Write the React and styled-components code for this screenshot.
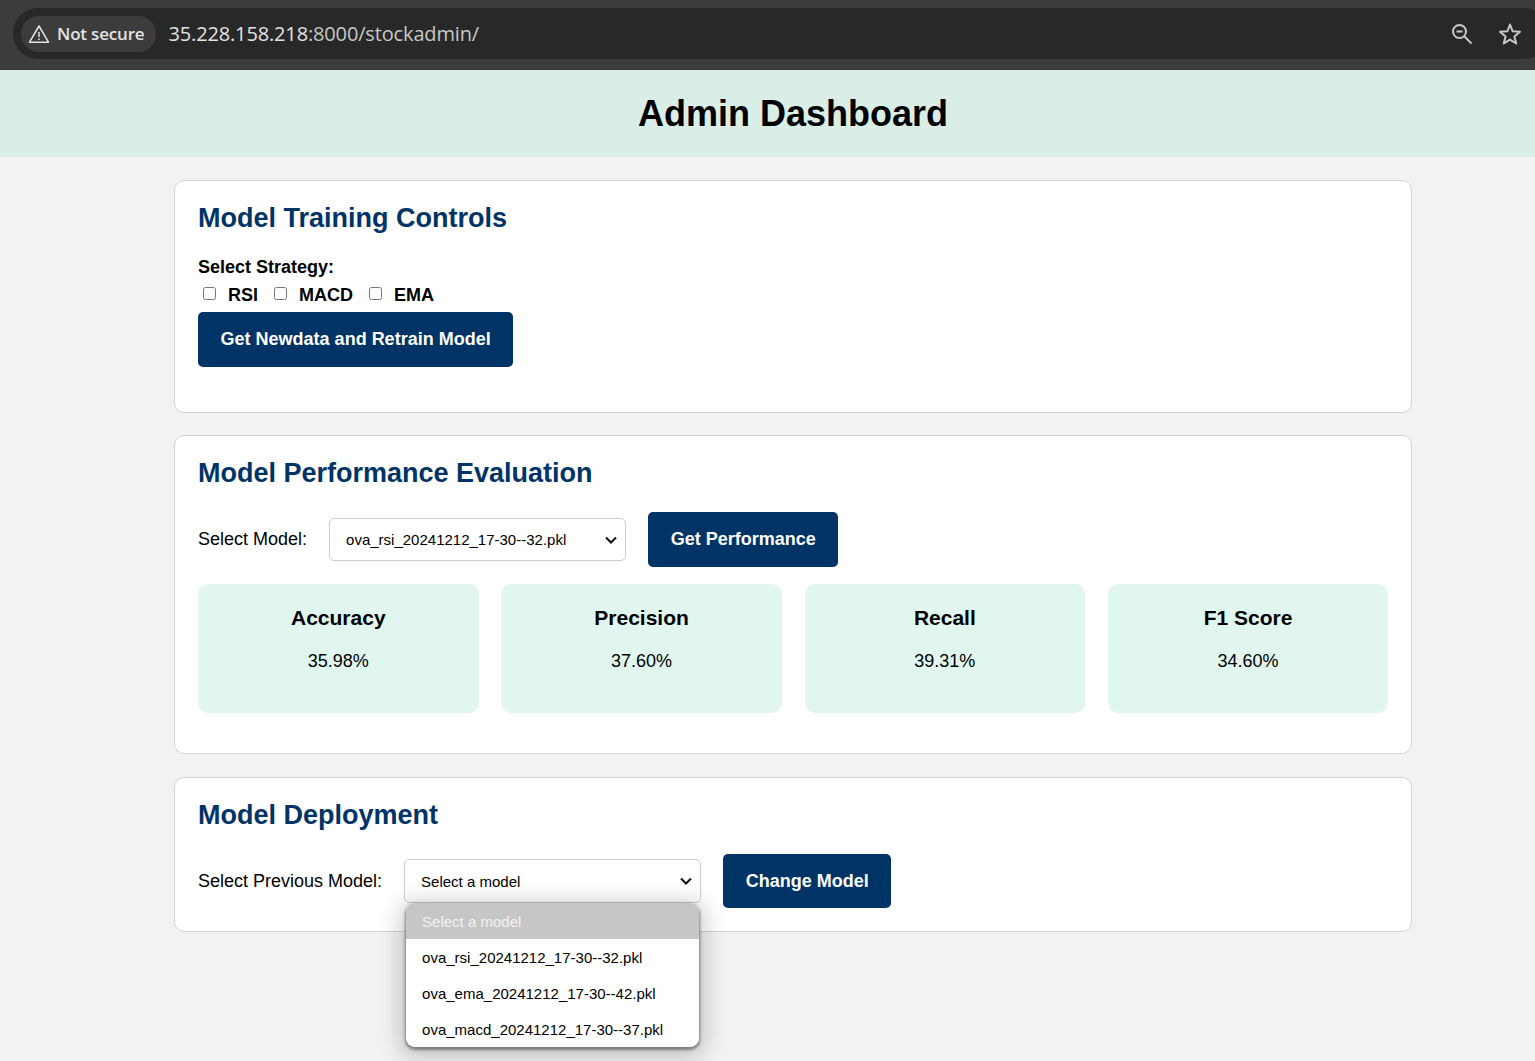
import React from "react";
import styled, { createGlobalStyle } from "styled-components";

const GlobalStyle = createGlobalStyle`
  html, body {
    margin: 0;
    padding: 0;
    height: 100%;
    overflow: hidden;
    background: #f2f2f2;
  }
  body {
    font-family: "Liberation Sans", Arial, sans-serif;
  }
`;

const metrics = [
  { name: "Accuracy", value: "35.98%" },
  { name: "Precision", value: "37.60%" },
  { name: "Recall", value: "39.31%" },
  { name: "F1 Score", value: "34.60%" },
];

const models = [
  "ova_rsi_20241212_17-30--32.pkl",
  "ova_ema_20241212_17-30--42.pkl",
  "ova_macd_20241212_17-30--37.pkl",
];

const Chevron = () => (
  <ChevronIcon width="12" height="8" viewBox="0 0 12 8" fill="none" stroke="#111" strokeWidth="2">
    <path d="M1 1.5 L6 6.5 L11 1.5" />
  </ChevronIcon>
);

const App = () => {
  return (
    <Window>
      <GlobalStyle />
      <BrowserBar>
        <AddressBar>
          <SecurityChip>
            <svg width="22" height="20" viewBox="0 0 22 20" fill="none" stroke="#e3e3e3" strokeWidth="1.5">
              <path d="M11 2 L20.5 18.2 H1.5 Z" strokeLinejoin="round" />
              <path d="M11 8 V13 M11 14.4 V16" />
            </svg>
            <span>Not secure</span>
          </SecurityChip>
          <Url>
            35.228.158.218<UrlDim>:8000/stockadmin/</UrlDim>
          </Url>
          <BarIcons>
            <svg width="24" height="24" viewBox="0 0 24 24" fill="none" stroke="#c7c7c7" strokeWidth="2">
              <circle cx="9.5" cy="9.5" r="6.5" />
              <path d="M14.5 14.5 L21.5 21.5" />
              <path d="M6.5 9.5 H12.5" />
            </svg>
            <svg width="24" height="24" viewBox="0 0 24 24" fill="none" stroke="#c7c7c7" strokeWidth="2">
              <path d="M12 2.5 L14.7 9.3 L22 9.8 L16.4 14.4 L18.2 21.5 L12 17.6 L5.8 21.5 L7.6 14.4 L2 9.8 L9.3 9.3 Z" strokeLinejoin="round" />
            </svg>
          </BarIcons>
        </AddressBar>
      </BrowserBar>

      <Page>
        <Header>
          <h1>Admin Dashboard</h1>
        </Header>

        <Main>
          <Card>
            <CardTitle>Model Training Controls</CardTitle>
            <StrategyLabel>Select Strategy:</StrategyLabel>
            <CheckRow>
              <CheckItem>
                <input type="checkbox" />
                RSI
              </CheckItem>
              <CheckItem>
                <input type="checkbox" />
                MACD
              </CheckItem>
              <CheckItem>
                <input type="checkbox" />
                EMA
              </CheckItem>
            </CheckRow>
            <PrimaryButton>Get Newdata and Retrain Model</PrimaryButton>
          </Card>

          <Card $bottom={40}>
            <CardTitle>Model Performance Evaluation</CardTitle>
            <ControlRow>
              <FieldLabel>Select Model:</FieldLabel>
              <SelectWrap>
                <ModelSelect defaultValue={models[0]}>
                  {models.map((m) => (
                    <option key={m}>{m}</option>
                  ))}
                </ModelSelect>
                <Chevron />
              </SelectWrap>
              <PrimaryButton>Get Performance</PrimaryButton>
            </ControlRow>
            <MetricGrid>
              {metrics.map((m) => (
                <Metric key={m.name}>
                  <MetricName>{m.name}</MetricName>
                  <MetricValue>{m.value}</MetricValue>
                </Metric>
              ))}
            </MetricGrid>
          </Card>

          <Card $bottom={23} $top={1}>
            <CardTitle>Model Deployment</CardTitle>
            <ControlRow $height={54}>
              <FieldLabel>Select Previous Model:</FieldLabel>
              <SelectWrap>
                <ModelSelect $height={44} defaultValue="">
                  <option value="">Select a model</option>
                  {models.map((m) => (
                    <option key={m}>{m}</option>
                  ))}
                </ModelSelect>
                <Chevron />
                <Dropdown>
                  <DropdownItem $selected>Select a model</DropdownItem>
                  {models.map((m) => (
                    <DropdownItem key={m}>{m}</DropdownItem>
                  ))}
                </Dropdown>
              </SelectWrap>
              <PrimaryButton $height={54}>Change Model</PrimaryButton>
            </ControlRow>
          </Card>
        </Main>
      </Page>
    </Window>
  );
};

export default App;

// Styled Components
const Window = styled.div`
  width: 1535px;
  height: 1061px;
  overflow: hidden;
  background: #f2f2f2;
`;

const BrowserBar = styled.div`
  height: 70px;
  box-sizing: border-box;
  padding: 8px 0 11px 13px;
  background: #3c3c3c;
`;

const AddressBar = styled.div`
  height: 51px;
  width: 1536px;
  box-sizing: border-box;
  display: flex;
  align-items: center;
  padding: 0 13px 0 8px;
  background: #282828;
  border-radius: 25px;
`;

const SecurityChip = styled.div`
  height: 36px;
  display: flex;
  align-items: center;
  gap: 7px;
  padding: 0 12px 0 7px;
  border-radius: 18px;
  background: #3c3c3c;
  color: #e3e3e3;
  font-family: "Open Sans", "Noto Sans", sans-serif;
  font-size: 17px;
  font-weight: 600;
  letter-spacing: -0.18px;
`;

const Url = styled.div`
  margin-left: 12px;
  color: #e3e3e3;
  font-family: "Open Sans", "Noto Sans", sans-serif;
  font-size: 20px;
  letter-spacing: -0.15px;
`;

const UrlDim = styled.span`
  color: #c7c7c7;
`;

const BarIcons = styled.div`
  margin-left: auto;
  margin-right: 14px;
  display: flex;
  align-items: center;
  gap: 24px;
`;

const Page = styled.div`
  width: 1586px;
`;

const Header = styled.header`
  height: 87px;
  display: flex;
  align-items: center;
  justify-content: center;
  background: #d9eee7;
  h1 {
    margin: 0;
    font-size: 36px;
    font-weight: 700;
    color: #000;
  }
`;

const Main = styled.main`
  width: 1238px;
  margin: 23px auto 0;
  display: flex;
  flex-direction: column;
  gap: 22px;
`;

const Card = styled.section`
  box-sizing: border-box;
  margin-top: ${(p) => p.$top ?? 0}px;
  padding: 21px 23px ${(p) => p.$bottom ?? 45}px;
  background: #fff;
  border: 1px solid #d4d4d4;
  border-radius: 10px;
`;

const CardTitle = styled.h2`
  margin: 0 0 23px;
  font-size: 27px;
  line-height: 32px;
  font-weight: 700;
  color: #003366;
`;

const StrategyLabel = styled.div`
  font-size: 18px;
  line-height: 20px;
  font-weight: 700;
  color: #000;
`;

const CheckRow = styled.div`
  display: flex;
  gap: 16px;
  height: 22px;
  margin: 7px 0 6px 5px;
`;

const CheckItem = styled.label`
  display: flex;
  align-items: center;
  gap: 12px;
  font-size: 18px;
  font-weight: 700;
  color: #000;
  input {
    margin: 0 0 4px;
    width: 13px;
    height: 13px;
  }
`;

const PrimaryButton = styled.button`
  height: ${(p) => p.$height ?? 55}px;
  padding: 0 22.6px;
  background: #003366;
  color: #fff;
  border: none;
  border-radius: 5px;
  font-family: inherit;
  font-size: 18px;
  font-weight: 700;
`;

const ControlRow = styled.div`
  display: flex;
  align-items: center;
  height: ${(p) => p.$height ?? 55}px;
`;

const FieldLabel = styled.label`
  font-size: 18px;
  color: #000;
  margin-right: 22px;
`;

const SelectWrap = styled.div`
  position: relative;
  display: flex;
  margin-right: 22px;
`;

const ModelSelect = styled.select`
  appearance: none;
  width: 297px;
  height: ${(p) => p.$height ?? 43}px;
  padding: 0 30px 0 16px;
  background: #fff;
  color: #000;
  border: 1px solid #ccc;
  border-radius: 5px;
  font-family: inherit;
  font-size: 15px;
`;

const ChevronIcon = styled.svg`
  position: absolute;
  top: 18px;
  right: 9px;
  pointer-events: none;
`;

const Dropdown = styled.div`
  position: absolute;
  top: 44px;
  left: 2px;
  width: 293px;
  overflow: hidden;
  background: #fff;
  border-radius: 9px;
  box-shadow: 0 2px 3px 1px rgba(0, 0, 0, 0.4), 0 4px 22px 6px rgba(0, 0, 0, 0.2);
`;

const DropdownItem = styled.div`
  height: 36px;
  line-height: 37px;
  padding-left: 16px;
  font-size: 15px;
  color: ${(p) => (p.$selected ? "#f2f2f2" : "#000")};
  background: ${(p) => (p.$selected ? "#c6c6c6" : "#fff")};
`;

const MetricGrid = styled.div`
  display: grid;
  grid-template-columns: repeat(4, 1fr);
  gap: 22.7px;
  margin: 17px -0.4px 0 0;
`;

const Metric = styled.div`
  box-sizing: border-box;
  height: 129px;
  padding-top: 22px;
  background: #e0f6ef;
  border-radius: 10px;
  text-align: center;
`;

const MetricName = styled.div`
  font-size: 21px;
  line-height: 24px;
  font-weight: 700;
  color: #000;
`;

const MetricValue = styled.div`
  margin-top: 21px;
  font-size: 18px;
  line-height: 20px;
  color: #000;
`;
